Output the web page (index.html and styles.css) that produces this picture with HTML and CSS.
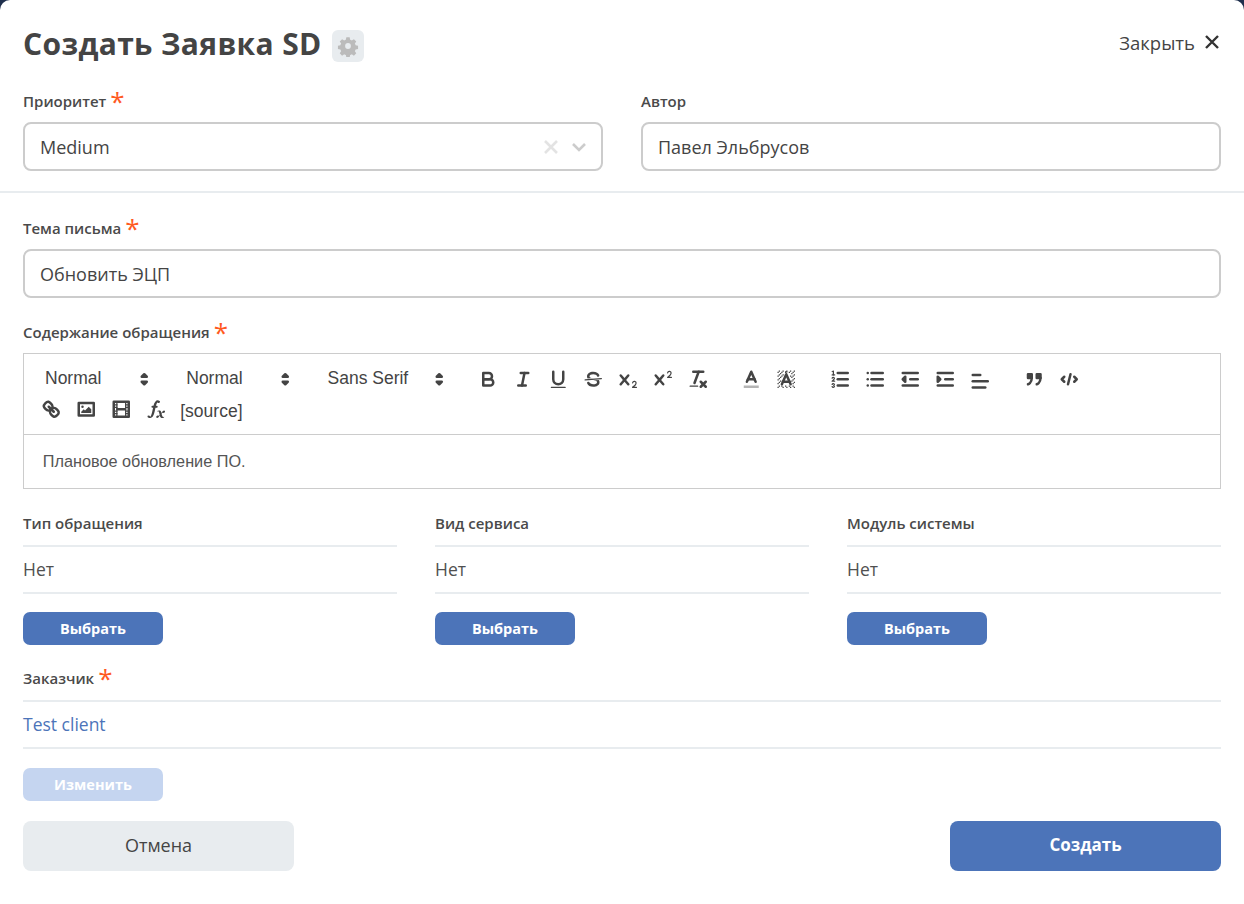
FILE: index.html
```html
<!DOCTYPE html>
<html lang="en">
<head>
   <meta charset="utf-8">
   <meta content="width=device-width, initial-scale=1.0" name="viewport">
   <title>Создать Заявка SD</title>
   <link rel="stylesheet" href="styles.css">
</head>
<body>
   <div class="modal">
      <div class="top">
         <div class="head">
            <div class="title">
               <h1>Создать Заявка SD</h1>
               <span class="gear">
                  <svg viewBox="0 0 24 24" width="22" height="22"><path d="M10 1.5h4l.6 3a8 8 0 0 1 2 .9l2.6-1.7 2.8 2.8-1.7 2.6a8 8 0 0 1 .9 2l3 .6v4l-3 .6a8 8 0 0 1-.9 2l1.7 2.6-2.8 2.8-2.6-1.7a8 8 0 0 1-2 .9l-.6 3h-4l-.6-3a8 8 0 0 1-2-.9l-2.6 1.7-2.8-2.8 1.7-2.6a8 8 0 0 1-.9-2l-3-.6v-4l3-.6a8 8 0 0 1 .9-2L2 6.5l2.8-2.8 2.6 1.7a8 8 0 0 1 2-.9zM12 8.5a3.5 3.5 0 1 0 0 7 3.5 3.5 0 0 0 0-7z" transform="translate(1.2 1.2) scale(.9)" fill-rule="evenodd"/></svg>
               </span>
            </div>
            <div class="close">
               <span class="close-txt">Закрыть</span>
               <svg viewBox="0 0 14 14" width="14" height="14"><path d="M1 1l12 12M13 1L1 13"/></svg>
            </div>
         </div>
         <div class="cols2">
            <div>
               <div class="lbl">Приоритет <span class="req">*</span></div>
               <div class="inp">
                  <span class="val">Medium</span>
                  <svg class="sel-x" viewBox="0 0 14 14" width="14" height="14"><path d="M1 1l12 12M13 1L1 13"/></svg>
                  <svg class="sel-arrow" viewBox="0 0 14 14" width="14" height="14"><path d="M1 4l6 6 6-6"/></svg>
               </div>
            </div>
            <div>
               <div class="lbl">Автор</div>
               <div class="inp"><span class="val">Павел Эльбрусов</span></div>
            </div>
         </div>
      </div>

      <div class="body">
         <div class="lbl">Тема письма <span class="req">*</span></div>
         <div class="inp"><span class="val">Обновить ЭЦП</span></div>

         <div class="lbl lbl-editor">Содержание обращения <span class="req">*</span></div>
         <div class="editor">
            <div class="toolbar">
               <span class="group">
                  <span class="picker"><span class="picker-txt">Normal</span><svg viewBox="0 0 18 18"><polygon class="st" points="7 11 9 13 11 11 7 11"/><polygon class="st" points="7 7 9 5 11 7 7 7"/></svg></span>
                  <span class="picker"><span class="picker-txt">Normal</span><svg viewBox="0 0 18 18"><polygon class="st" points="7 11 9 13 11 11 7 11"/><polygon class="st" points="7 7 9 5 11 7 7 7"/></svg></span>
                  <span class="picker picker-font"><span class="picker-txt">Sans Serif</span><svg viewBox="0 0 18 18"><polygon class="st" points="7 11 9 13 11 11 7 11"/><polygon class="st" points="7 7 9 5 11 7 7 7"/></svg></span>
               </span>
               <span class="group">
                  <span class="tb"><svg viewBox="0 0 18 18"><path class="st" d="M5,4H9.5A2.5,2.5,0,0,1,12,6.5v0A2.5,2.5,0,0,1,9.5,9H5A0,0,0,0,1,5,9V4A0,0,0,0,1,5,4Z"/><path class="st" d="M5,9h5.5A2.5,2.5,0,0,1,13,11.5v0A2.5,2.5,0,0,1,10.5,14H5a0,0,0,0,1,0,0V9A0,0,0,0,1,5,9Z"/></svg></span>
                  <span class="tb"><svg viewBox="0 0 18 18"><line class="st" x1="7" x2="13" y1="4" y2="4"/><line class="st" x1="5" x2="11" y1="14" y2="14"/><line class="st" x1="8" x2="10" y1="14" y2="4"/></svg></span>
                  <span class="tb"><svg viewBox="0 0 18 18"><path class="st" d="M5,3V9a4.012,4.012,0,0,0,4,4H9a4.012,4.012,0,0,0,4-4V3"/><rect class="fl" height="1" rx=".5" ry=".5" width="12" x="3" y="15"/></svg></span>
                  <span class="tb"><svg viewBox="0 0 18 18"><line class="st thin" x1="15.5" x2="2.5" y1="8.5" y2="9.5"/><path class="fl" d="M9.007,8C6.542,7.791,6,7.519,6,6.5,6,5.792,7.283,5,9,5c1.571,0,2.765.679,2.969,1.309a1,1,0,0,0,1.9-.617C13.356,4.106,11.354,3,9,3,6.2,3,4,4.538,4,6.5a3.2,3.2,0,0,0,.5,1.843Z"/><path class="fl" d="M8.984,10C11.457,10.208,12,10.479,12,11.5c0,.708-1.283,1.5-3,1.5-1.571,0-2.765-.679-2.969-1.309a1,1,0,1,0-1.9.617C4.644,13.894,6.646,15,9,15c2.8,0,5-1.538,5-3.5a3.2,3.2,0,0,0-.5-1.843Z"/></svg></span>
                  <span class="tb"><svg viewBox="0 0 18 18"><path class="fl" d="M15.5,15H13.861a3.858,3.858,0,0,0,1.914-2.975,1.8,1.8,0,0,0-1.6-1.751A1.921,1.921,0,0,0,12.021,11.7a0.50013,0.50013,0,1,0,.957.291h0a0.914,0.914,0,0,1,1.053-.725,0.81,0.81,0,0,1,.744.762c0,1.076-1.16971,1.86982-1.93971,2.43082A1.45639,1.45639,0,0,0,12,15.5a0.5,0.5,0,0,0,.5.5h3A0.5,0.5,0,0,0,15.5,15Z"/><path class="fl" d="M9.65,5.241a1,1,0,0,0-1.409.108L6,7.964,3.759,5.349A1,1,0,0,0,2.192,6.59178Q2.21541,6.6213,2.241,6.649L4.684,9.5,2.241,12.35A1,1,0,0,0,3.71,13.70722q0.02557-.02768.049-0.05722L6,11.036,8.241,13.65a1,1,0,1,0,1.567-1.24277Q9.78459,12.3777,9.759,12.35L7.316,9.5,9.759,6.651A1,1,0,0,0,9.65,5.241Z"/></svg></span>
                  <span class="tb"><svg viewBox="0 0 18 18"><path class="fl" d="M15.5,7H13.861a4.015,4.015,0,0,0,1.914-2.975,1.8,1.8,0,0,0-1.6-1.751A1.922,1.922,0,0,0,12.021,3.7a0.5,0.5,0,1,0,.957.291,0.917,0.917,0,0,1,1.053-.725,0.81,0.81,0,0,1,.744.762c0,1.077-1.164,1.925-1.934,2.486A1.423,1.423,0,0,0,12,7.5a0.5,0.5,0,0,0,.5.5h3A0.5,0.5,0,0,0,15.5,7Z"/><path class="fl" d="M9.651,5.241a1,1,0,0,0-1.41.108L6,7.964,3.759,5.349a1,1,0,1,0-1.519,1.3L4.683,9.5,2.241,12.35a1,1,0,1,0,1.519,1.3L6,11.036,8.241,13.65a1,1,0,0,0,1.519-1.3L7.317,9.5,9.759,6.651A1,1,0,0,0,9.651,5.241Z"/></svg></span>
                  <span class="tb"><svg viewBox="0 0 18 18"><line class="st" x1="5" x2="13" y1="3" y2="3"/><line class="st" x1="6" x2="9.35" y1="12" y2="3"/><line class="st" x1="11" x2="15" y1="11" y2="15"/><line class="st" x1="15" x2="11" y1="11" y2="15"/><rect class="fl" height="1" rx=".5" ry=".5" width="7" x="2" y="14"/></svg></span>
               </span>
               <span class="group">
                  <span class="tb"><svg viewBox="0 0 18 18"><line class="st under" x1="3" x2="15" y1="15" y2="15"/><polyline class="st" points="5.5 11 9 3 12.5 11"/><line class="st" x1="11.63" x2="6.38" y1="9" y2="9"/></svg></span>
                  <span class="tb"><svg viewBox="0 0 18 18"><path class="fl" d="M2 3h1v1H2zM3 2h1v1H3zM5 3h1v1H5zM6 2h1v1H6zM8 3h1v1H8zM9 2h1v1H9zM11 3h1v1h-1zM12 2h1v1h-1zM15 2h1v1h-1zM14 3h1v1h-1zM4 4h1v1H4zM3 5h1v1H3zM6 5h1v1H6zM2 6h1v1H2zM5 6h1v1H5zM4 7h1v1H4zM3 8h1v1H3zM2 9h1v1H2zM4 10h1v1H4zM3 11h1v1H3zM2 12h1v1H2zM3 14h1v1H3zM2 15h1v1H2zM5 14h1v1H5zM6 15h1v1H6zM8 14h1v1H8zM9 15h1v1H9zM11 14h1v1h-1zM12 15h1v1h-1zM14 14h1v1h-1zM15 15h1v1h-1zM13 4h1v1h-1zM15 5h1v1h-1zM12 6h1v1h-1zM14 6h1v1h-1zM13 7h1v1h-1zM15 8h1v1h-1zM14 9h1v1h-1zM13 10h1v1h-1zM15 11h1v1h-1zM14 12h1v1h-1zM8 2.5h2v1H8z"/><polyline class="st" points="5.5 13 9 5 12.5 13"/><line class="st" x1="11.63" x2="6.38" y1="11" y2="11"/></svg></span>
               </span>
               <span class="group">
                  <span class="tb"><svg viewBox="0 0 18 18"><line class="st" x1="7" x2="15" y1="4" y2="4"/><line class="st" x1="7" x2="15" y1="9" y2="9"/><line class="st" x1="7" x2="15" y1="14" y2="14"/><line class="st thin" x1="2.5" x2="4.5" y1="5.5" y2="5.5"/><path class="fl" d="M3.5,6A0.5,0.5,0,0,1,3,5.5V3.085l-0.276.138A0.5,0.5,0,0,1,2.053,3c-0.124-.247-0.023-0.324.224-0.447l1-.5A0.5,0.5,0,0,1,4,2.5v3A0.5,0.5,0,0,1,3.5,6Z"/><path class="st thin" d="M4.5,10.5h-2c0-.234,1.85-1.076,1.85-2.234A0.959,0.959,0,0,0,2.5,8.156"/><path class="st thin" d="M2.5,14.846a0.959,0.959,0,0,0,1.85-.109A0.7,0.7,0,0,0,3.75,14a0.688,0.688,0,0,0,.6-0.736,0.959,0.959,0,0,0-1.85-.109"/></svg></span>
                  <span class="tb"><svg viewBox="0 0 18 18"><line class="st" x1="6" x2="15" y1="4" y2="4"/><line class="st" x1="6" x2="15" y1="9" y2="9"/><line class="st" x1="6" x2="15" y1="14" y2="14"/><line class="st" x1="3" x2="3" y1="4" y2="4"/><line class="st" x1="3" x2="3" y1="9" y2="9"/><line class="st" x1="3" x2="3" y1="14" y2="14"/></svg></span>
                  <span class="tb"><svg viewBox="0 0 18 18"><line class="st" x1="3" x2="15" y1="14" y2="14"/><line class="st" x1="3" x2="15" y1="4" y2="4"/><line class="st" x1="9" x2="15" y1="9" y2="9"/><polyline class="st fl" points="5 7 5 11 3 9 5 7"/></svg></span>
                  <span class="tb"><svg viewBox="0 0 18 18"><line class="st" x1="3" x2="15" y1="14" y2="14"/><line class="st" x1="3" x2="15" y1="4" y2="4"/><line class="st" x1="9" x2="15" y1="9" y2="9"/><polyline class="st fl" points="3 7 3 11 5 9 3 7"/></svg></span>
                  <span class="tb tb-low"><svg viewBox="0 0 18 18"><line class="st" x1="3" x2="15" y1="9" y2="9"/><line class="st" x1="3" x2="13" y1="14" y2="14"/><line class="st" x1="3" x2="9" y1="4" y2="4"/></svg></span>
               </span>
               <span class="group">
                  <span class="tb"><svg viewBox="0 0 18 18"><rect class="st fl" height="3" width="3" x="4" y="5"/><rect class="st fl" height="3" width="3" x="11" y="5"/><path class="st" d="M7,8c0,4.031-3,5-3,5"/><path class="st" d="M14,8c0,4.031-3,5-3,5"/></svg></span>
                  <span class="tb"><svg viewBox="0 0 18 18"><polyline class="st" points="5 7 3 9 5 11"/><polyline class="st" points="13 7 15 9 13 11"/><line class="st" x1="10" x2="8" y1="5" y2="13"/></svg></span>
               </span>
               <span class="group">
                  <span class="tb"><svg viewBox="0 0 18 18"><line class="st" x1="7" x2="11" y1="7" y2="11"/><path class="st" d="M8.9,4.577a3.476,3.476,0,0,1,.36,4.679A3.476,3.476,0,0,1,4.577,8.9C3.185,7.5,2.035,6.4,4.217,4.217S7.5,3.185,8.9,4.577Z"/><path class="st" d="M13.423,9.1a3.476,3.476,0,0,0-4.679-.36,3.476,3.476,0,0,0,.36,4.679c1.392,1.392,2.5,2.542,4.679.36S14.815,10.5,13.423,9.1Z"/></svg></span>
                  <span class="tb"><svg viewBox="0 0 18 18"><rect class="st" height="10" width="12" x="3" y="4"/><circle class="fl" cx="6" cy="7" r="1"/><polyline class="fl" points="5 12 5 11 7 9 8 10 11 7 13 9 13 12 5 12"/></svg></span>
                  <span class="tb"><svg viewBox="0 0 18 18"><rect class="st" height="12" width="12" x="3" y="3"/><rect class="fl" height="12" width="1" x="5" y="3"/><rect class="fl" height="12" width="1" x="12" y="3"/><rect class="fl" height="2" width="8" x="5" y="8"/><rect class="fl" height="1" width="3" x="3" y="5"/><rect class="fl" height="1" width="3" x="3" y="7"/><rect class="fl" height="1" width="3" x="3" y="10"/><rect class="fl" height="1" width="3" x="3" y="12"/><rect class="fl" height="1" width="3" x="12" y="5"/><rect class="fl" height="1" width="3" x="12" y="7"/><rect class="fl" height="1" width="3" x="12" y="10"/><rect class="fl" height="1" width="3" x="12" y="12"/></svg></span>
                  <span class="tb"><svg viewBox="0 0 18 18"><path class="fl" d="M11.759,2.482a2.561,2.561,0,0,0-3.53.607A7.656,7.656,0,0,0,6.8,6.2C6.109,9.188,5.275,14.677,4.15,14.927a1.545,1.545,0,0,0-1.3-.933A0.922,0.922,0,0,0,2,15.036S1.954,16,4.119,16s3.091-2.691,3.7-5.553c0.177-.826.36-1.726,0.554-2.6L8.775,6.2c0.381-1.421.807-2.521,1.306-2.676a1.014,1.014,0,0,0,1.02.56A0.966,0.966,0,0,0,11.759,2.482Z"/><rect class="fl" height="1.6" rx=".8" ry=".8" width="5" x="5.15" y="6.2"/><path class="fl" d="M13.663,12.027a1.662,1.662,0,0,1,.266-0.276q0.193,0.069.456,0.138a2.1,2.1,0,0,0,.535.069,1.075,1.075,0,0,0,.767-0.3,1.044,1.044,0,0,0,.314-0.8,0.84,0.84,0,0,0-.238-0.619,0.8,0.8,0,0,0-.594-0.239,1.154,1.154,0,0,0-.781.3,4.607,4.607,0,0,0-.781,1q-0.091.15-.218,0.346l-0.246.38c-0.068-.288-0.137-0.582-0.212-0.885-0.459-1.847-2.494-.984-2.941-0.8-0.482.2-.353,0.647-0.094,0.529a0.869,0.869,0,0,1,1.281.585c0.217,0.751.377,1.436,0.527,2.038a5.688,5.688,0,0,1-.362.467,2.69,2.69,0,0,1-.264.271q-0.221-.08-0.471-0.147a2.029,2.029,0,0,0-.522-0.066,1.079,1.079,0,0,0-.768.3A1.058,1.058,0,0,0,9,15.131a0.82,0.82,0,0,0,.832.852,1.134,1.134,0,0,0,.787-0.3,5.11,5.11,0,0,0,.776-0.993q0.141-.219.215-0.34c0.046-.076.122-0.194,0.223-0.346a2.786,2.786,0,0,0,.918,1.726,2.582,2.582,0,0,0,2.376-.185c0.317-.181.212-0.565,0-0.494A0.807,0.807,0,0,1,14.176,15a5.159,5.159,0,0,1-.913-2.446l0,0Q13.487,12.24,13.663,12.027Z"/></svg></span>
                  <span class="tb-text">[source]</span>
               </span>
            </div>
            <div class="text">Плановое обновление ПО.</div>
         </div>

         <div class="cols3">
            <div>
               <div class="field-lbl">Тип обращения</div>
               <div class="field-val">Нет</div>
               <div class="btn">Выбрать</div>
            </div>
            <div>
               <div class="field-lbl">Вид сервиса</div>
               <div class="field-val">Нет</div>
               <div class="btn">Выбрать</div>
            </div>
            <div>
               <div class="field-lbl">Модуль системы</div>
               <div class="field-val">Нет</div>
               <div class="btn">Выбрать</div>
            </div>
         </div>

         <div class="field-lbl client-lbl">Заказчик <span class="req">*</span></div>
         <div class="field-val client">Test client</div>
         <div class="btn btn-off">Изменить</div>

         <div class="foot">
            <div class="big big-cancel">Отмена</div>
            <div class="big big-ok">Создать</div>
         </div>
      </div>
   </div>
</body>
</html>
```

FILE: styles.css
```css
* {
    margin: 0;
    padding: 0;
    box-sizing: border-box;
}
html, body {
    height: 100%;
}
body {
    background: #1f2f4d;
    font-family: "Open Sans", sans-serif;
    color: #444;
}
.modal {
    background: #fff;
    border-radius: 10px 10px 0 0;
    height: 904px;
    overflow: hidden;
}
.top {
    padding: 27px 23px 20px;
    border-bottom: 2px solid #e8ecef;
}
.head {
    display: flex;
    justify-content: space-between;
    align-items: center;
    height: 34px;
    margin-bottom: 31px;
}
.title {
    display: flex;
    align-items: center;
    gap: 10px;
}
.title h1 {
    font-size: 30px;
    font-weight: 700;
    letter-spacing: 0.35px;
    line-height: 34px;
    color: #444;
}
.gear {
    width: 32px;
    height: 32px;
    margin-top: 4px;
    border-radius: 6px;
    background: #e8ecef;
    display: flex;
    align-items: center;
    justify-content: center;
    fill: #bbb;
}
.close {
    display: flex;
    align-items: center;
    gap: 10px;
    font-size: 18.5px;
    color: #444;
    margin-right: 2px;
}
.close-txt {
    margin-top: -4px;
}
.close svg {
    fill: none;
    stroke: #333;
    stroke-width: 2.4;
    margin-top: -4px;
}
.cols2 {
    display: grid;
    grid-template-columns: 1fr 1fr;
    gap: 38px;
}
.lbl {
    display: flex;
    align-items: center;
    gap: 4px;
    height: 20px;
    padding-bottom: 2px;
    margin-bottom: 10px;
    font-size: 15px;
    font-weight: 600;
    line-height: 20px;
    color: #4a4a4a;
}
.req {
    color: #ff5a1f;
    font-size: 26px;
    font-weight: 400;
    line-height: 20px;
    height: 20px;
}
.inp {
    display: flex;
    align-items: center;
    height: 49px;
    padding: 0 15px;
    border: 2px solid #ccc;
    border-radius: 8px;
    font-size: 18px;
    font-weight: 500;
}
.val {
    flex: 1;
}
.sel-x {
    fill: none;
    stroke: #e3e3e3;
    stroke-width: 2.6;
    margin-right: 14px;
}
.sel-arrow {
    fill: none;
    stroke: #ccc;
    stroke-width: 2.6;
}
.body {
    padding: 26px 23px 0;
}
.lbl-editor {
    margin-top: 25px;
}
.editor {
    border: 1px solid #ccc;
    font-family: "Liberation Sans", sans-serif;
    height: 136px;
}
.toolbar {
    display: flex;
    flex-wrap: wrap;
    padding: 10px;
    border-bottom: 1px solid #ccc;
    color: #444;
}
.group {
    display: flex;
    margin-right: 18.75px;
}
.picker {
    display: flex;
    align-items: center;
    justify-content: space-between;
    width: 122.5px;
    height: 30px;
    padding-left: 11px;
    font-size: 17.5px;
    margin-right: 18.75px;
}
.picker-txt {
    margin-top: -2px;
}
.picker-font {
    width: 135px;
    margin-right: 0;
}
.picker svg {
    width: 22.5px;
    height: 22.5px;
    margin-right: 1px;
}
.tb {
    display: flex;
    width: 35px;
    height: 30px;
    padding: 3.75px 6.25px;
}
.tb-low {
    padding-top: 6px;
}
.tb svg {
    width: 22.5px;
    height: 22.5px;
}
.tb-text {
    height: 30px;
    line-height: 34px;
    padding: 0 6.25px;
    font-size: 17.5px;
}
.st {
    fill: none;
    stroke: #444;
    stroke-width: 2;
    stroke-linecap: round;
    stroke-linejoin: round;
    stroke-miterlimit: 10;
}
.st.thin {
    stroke-width: 1;
}
.st.under {
    stroke: #b4b4b4;
    stroke-linecap: butt;
    stroke-width: 2;
}
.fl, .st.fl {
    fill: #444;
}
.text {
    padding: 15px 18.75px;
    font-size: 16.25px;
    line-height: 23px;
    color: #555;
}
.cols3 {
    display: grid;
    grid-template-columns: repeat(3, 1fr);
    gap: 38px;
    margin-top: 25px;
}
.field-lbl {
    display: flex;
    align-items: center;
    gap: 4px;
    height: 20px;
    padding-bottom: 2px;
    font-size: 15px;
    font-weight: 600;
    line-height: 20px;
    color: #4a4a4a;
}
.field-val {
    margin-top: 11px;
    height: 49px;
    line-height: 45px;
    border-top: 2px solid #e8ecef;
    border-bottom: 2px solid #e8ecef;
    font-size: 17.5px;
    font-weight: 400;
    color: #505050;
}
.btn {
    width: 140px;
    height: 33px;
    margin-top: 18px;
    border-radius: 7px;
    background: #4c74b9;
    color: #fff;
    font-size: 14.5px;
    font-weight: 700;
    line-height: 33px;
    text-align: center;
}
.client-lbl {
    margin-top: 24px;
}
.client {
    color: #4c74b9;
    margin-top: 11px;
}
.btn-off {
    margin-top: 19px;
    background: #c5d5f0;
}
.foot {
    display: flex;
    justify-content: space-between;
    margin-top: 20px;
}
.big {
    width: 271px;
    height: 50px;
    border-radius: 8px;
    font-size: 18px;
    line-height: 48px;
    text-align: center;
}
.big-cancel {
    background: #e8ecef;
    font-weight: 500;
}
.big-ok {
    background: #4c74b9;
    color: #fff;
    font-size: 17px;
    font-weight: 700;
}
```
